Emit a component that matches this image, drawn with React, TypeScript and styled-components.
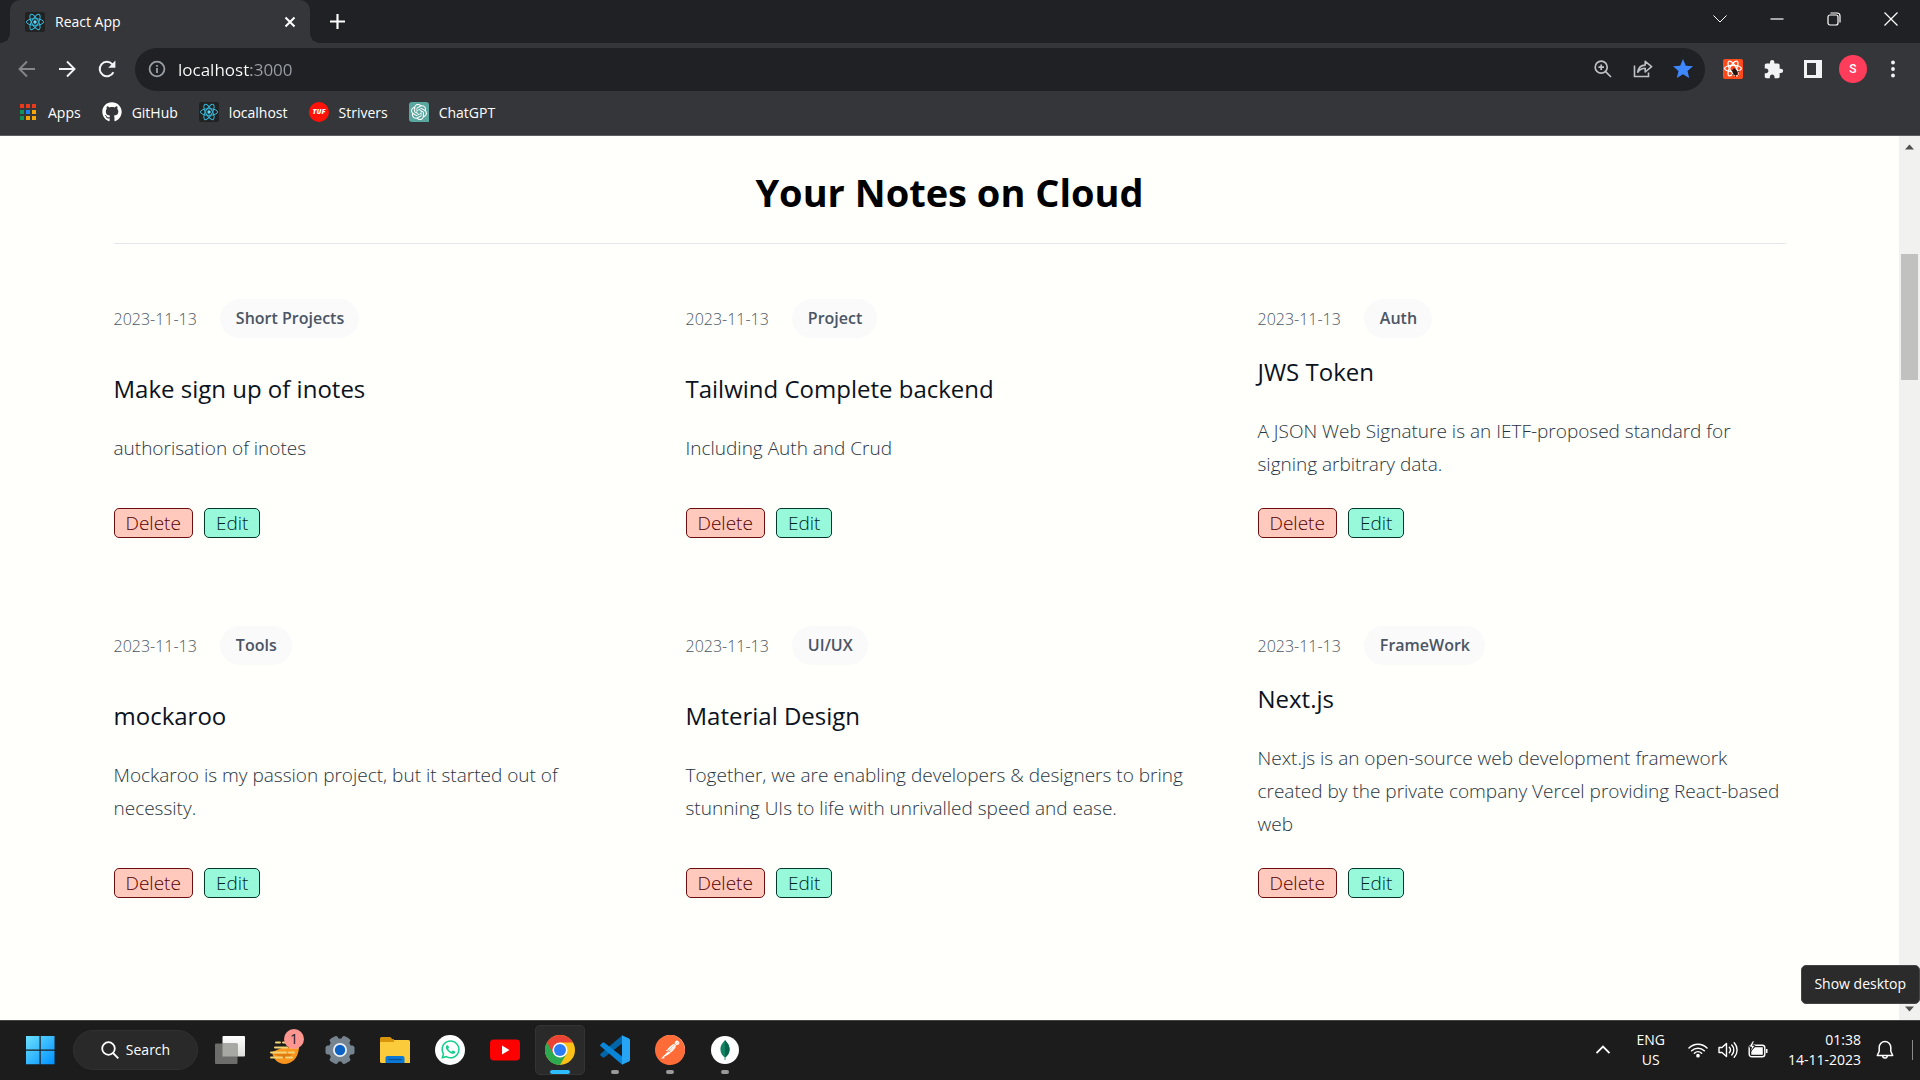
import React from "react";
import styled, { createGlobalStyle } from "styled-components";
import { FaGithub, FaWhatsapp } from "react-icons/fa";
import { SiOpenai, SiPostman } from "react-icons/si";
import { MdExtension, MdStar } from "react-icons/md";

const GlobalStyle = createGlobalStyle`
  *, *::before, *::after { box-sizing: border-box; }
  body {
    margin: 0;
    background: #fffffb;
    font-family: "Open Sans", "Noto Sans", sans-serif;
  }
  button, input { font: inherit; color: inherit; }
  button { padding: 0; border: 0; background: none; cursor: pointer; }
  h1, h2, p, ul { margin: 0; padding: 0; }
  a { color: inherit; text-decoration: none; }
  svg { display: block; flex-shrink: 0; }
`;

const Shell = styled.div`
  display: flex;
  flex-direction: column;
  height: 100vh;
  overflow: hidden;
`;

/* ---------- browser chrome ---------- */

const TabStrip = styled.div`
  display: flex;
  align-items: center;
  height: 43px;
  padding: 0 1px 0 10px;
  background: #202124;
  color: #fff;
`;

const Tab = styled.div`
  position: relative;
  display: flex;
  align-items: center;
  gap: 10px;
  width: 300px;
  height: 43px;
  padding: 0 8px 0 15px;
  border-radius: 10px 10px 0 0;
  background: #35363a;
  font-size: 14px;

  &::before,
  &::after {
    content: "";
    position: absolute;
    bottom: 0;
    width: 10px;
    height: 10px;
  }
  &::before {
    right: 100%;
    background: radial-gradient(circle at 0 0, #202124 10px, #35363a 10px);
  }
  &::after {
    left: 100%;
    background: radial-gradient(circle at 100% 0, #202124 10px, #35363a 10px);
  }
`;

const TabTitle = styled.span`
  flex: 1;
`;

const IconButton = styled.button`
  display: flex;
  align-items: center;
  justify-content: center;
  flex-shrink: 0;
  width: 24px;
  height: 24px;
`;

const NewTabButton = styled(IconButton)`
  margin-left: 15px;
`;

const WindowButtons = styled.div`
  display: flex;
  margin-left: auto;
  height: 37px;
  align-self: flex-start;
`;

const WindowButton = styled.button`
  display: flex;
  align-items: center;
  justify-content: center;
  width: 57px;
`;

const Toolbar = styled.div`
  display: flex;
  align-items: center;
  gap: 16px;
  height: 52px;
  padding: 0 15px;
  background: #35363a;
  color: #f1f3f4;
`;

const Omnibox = styled.label`
  display: flex;
  align-items: center;
  gap: 16px;
  flex: 1;
  height: 43px;
  padding: 0 10px;
  border-radius: 22px;
  background: #202124;
  color: #9aa0a6;
`;

const AddressInput = styled.input`
  flex: 1;
  min-width: 0;
  margin-left: -7px;
  padding: 0;
  border: 0;
  outline: 0;
  font-size: 17px;
  color: #9aa0a6;
  background: linear-gradient(90deg, #ffffff 73px, #9aa0a6 73px);
  background-clip: text;
  -webkit-text-fill-color: transparent;
`;

const Avatar = styled.span`
  flex-shrink: 0;
  width: 28px;
  height: 28px;
  border-radius: 50%;
  background: #ff3d5a;
  color: #fff;
  font-family: Roboto, sans-serif;
  font-size: 12px;
  font-weight: 500;
  line-height: 28px;
  text-align: center;
`;

const BookmarkBar = styled.nav`
  display: flex;
  align-items: center;
  gap: 21px;
  height: 41px;
  padding: 0 18px 6px;
  border-bottom: 1px solid #5c5d60;
  background: #35363a;
  color: #fff;
  font-size: 14px;
`;

const Bookmark = styled.a`
  display: flex;
  align-items: center;
  gap: 10px;
  height: 32px;
`;

const GptTile = styled.span`
  display: flex;
  align-items: center;
  justify-content: center;
  width: 20px;
  height: 20px;
  border-radius: 3px 3px 0 3px;
  background: #5aa79f;
  color: #fff;
`;

/* ---------- notes page ---------- */

const Viewport = styled.div`
  display: flex;
  flex: 1;
  min-height: 0;
  overflow: hidden;
`;

const Page = styled.main`
  flex: 1;
  min-width: 0;
  padding: 0 32px;
  background: #fffffb;
`;

const Content = styled.div`
  max-width: 1672px;
  margin: 0 auto;
`;

const Heading = styled.h1`
  padding: 29px 0 23px;
  border-bottom: 1px solid #e5e7eb;
  color: #000;
  font-size: 38px;
  font-weight: 700;
  line-height: 55px;
  text-align: center;
`;

const NoteGrid = styled.div`
  display: grid;
  grid-template-columns: repeat(3, minmax(0, 1fr));
  gap: 88px 44px;
  padding-top: 55px;
`;

const Note = styled.article`
  display: flex;
  flex-direction: column;
  align-items: flex-start;
  justify-content: space-between;
`;

const NoteMeta = styled.div`
  display: flex;
  align-items: center;
  gap: 23px;
  font-size: 16px;
  line-height: 22px;
`;

const NoteDate = styled.time`
  color: #4b5563;
  font-weight: 300;
`;

const Tag = styled.a`
  padding: 8px 15px 9px 16px;
  border-radius: 20px;
  background: #fafafb;
  color: #4b5563;
  font-weight: 600;
`;

const NoteTitle = styled.h2`
  margin-top: 17px;
  color: #0b1220;
  font-size: 24px;
  font-weight: 500;
  line-height: 33px;
`;

const NoteText = styled.p`
  margin-top: 27px;
  padding-right: 4px;
  color: #293442;
  font-size: 19px;
  font-weight: 300;
  line-height: 33px;
`;

const NoteActions = styled.div`
  display: flex;
  gap: 11px;
  margin-top: 27px;
`;

const ActionButton = styled.button<{ $tone: "danger" | "success" }>`
  height: 30px;
  padding: 0 11px;
  border: 1px solid ${(p) => (p.$tone === "danger" ? "#6b0f0f" : "#04382b")};
  border-radius: 5px;
  background: ${(p) => (p.$tone === "danger" ? "#ffc9be" : "#98f8da")};
  color: ${(p) => (p.$tone === "danger" ? "#520000" : "#00281d")};
  font-size: 19px;
  font-weight: 300;
  line-height: 28px;
`;

const ScrollTrack = styled.div`
  display: flex;
  flex-direction: column;
  align-items: center;
  width: 21px;
  padding: 8px 0;
  background: #f1f1f0;
`;

const ScrollThumb = styled.div`
  width: 17px;
  height: 126px;
  margin: 104px 0 auto;
  background: #c1c1bf;
`;

/* ---------- taskbar ---------- */

const Taskbar = styled.footer`
  display: flex;
  align-items: center;
  justify-content: space-between;
  height: 60px;
  padding: 0 7px 2px 15px;
  border-top: 1px solid #434343;
  background: #1c1c1c;
  color: #fff;
  font-size: 14px;
`;

const AppList = styled.div`
  display: flex;
  align-items: center;
  gap: 5px;
`;

const SearchButton = styled.button`
  display: flex;
  align-items: center;
  justify-content: center;
  gap: 7px;
  width: 125px;
  height: 40px;
  margin: 0 2px 0 3px;
  border: 1px solid #303030;
  border-radius: 20px;
  background: #292929;
`;

const AppButton = styled.button<{ $active?: boolean }>`
  position: relative;
  display: flex;
  align-items: center;
  justify-content: center;
  width: 50px;
  height: 50px;
  border: 1px solid ${(p) => (p.$active ? "#343434" : "transparent")};
  border-radius: 5px;
  background: ${(p) => (p.$active ? "#2a2a2a" : "transparent")};
`;

const RunMark = styled.span<{ $active?: boolean }>`
  position: absolute;
  bottom: 0;
  left: 50%;
  width: ${(p) => (p.$active ? 20 : 8)}px;
  height: 4px;
  transform: translateX(-50%);
  border-radius: 2px;
  background: ${(p) => (p.$active ? "#2cbcff" : "#999")};
`;

const CountBadge = styled.span`
  position: absolute;
  top: 3px;
  right: 5px;
  width: 20px;
  height: 20px;
  border-radius: 50%;
  background: #ff968f;
  color: #1c1c1c;
  font-size: 14px;
  line-height: 20px;
  text-align: center;
`;

const WhiteDisc = styled.span<{ $size: number }>`
  display: flex;
  align-items: center;
  justify-content: center;
  width: ${(p) => p.$size}px;
  height: ${(p) => p.$size}px;
  border-radius: 50%;
  background: #fff;
`;

const Tray = styled.div`
  display: flex;
  align-items: center;
`;

const Language = styled.button`
  margin-left: 21px;
  line-height: 20px;
  text-align: center;
`;

const StatusButton = styled.button`
  display: flex;
  align-items: center;
  gap: 10px;
  margin-left: 23px;
`;

const Clock = styled.button`
  margin: 0 12px 0 20px;
  line-height: 20px;
  text-align: right;
`;

const Line = styled.span`
  display: block;
`;

const DesktopEdge = styled.button`
  width: 1px;
  height: 20px;
  margin-left: 15px;
  background: #8a8a8a;
`;

const Tooltip = styled.div`
  position: fixed;
  right: 0;
  bottom: 76px;
  padding: 8px 13px 9px 12px;
  border: 1px solid #454545;
  border-radius: 5px;
  background: #2b2b2b;
  color: #fff;
  font-size: 14px;
  line-height: 20px;
`;

/* ---------- drawings ---------- */

const ReactTile = () => (
  <svg width="20" height="20" viewBox="0 0 20 20">
    <rect width="20" height="20" rx="2" fill="#222" />
    <g fill="none" stroke="#35b9dc" strokeWidth="1">
      <ellipse cx="10" cy="10" rx="8.6" ry="3.3" />
      <ellipse cx="10" cy="10" rx="8.6" ry="3.3" transform="rotate(60 10 10)" />
      <ellipse cx="10" cy="10" rx="8.6" ry="3.3" transform="rotate(120 10 10)" />
    </g>
    <circle cx="10" cy="10" r="1.7" fill="#5fdcff" />
  </svg>
);

const AppsGrid = () => {
  const colors = ["#ea3a1b", "#ea3a1b", "#ea3a1b", "#12915a", "#1a82f0", "#f6a60a", "#12915a", "#f6a60a", "#f6a60a"];
  return (
    <svg width="20" height="20" viewBox="0 0 20 20">
      {colors.map((c, i) => (
        <rect key={i} x={2 + (i % 3) * 6} y={2 + Math.floor(i / 3) * 6} width="4" height="4" fill={c} />
      ))}
    </svg>
  );
};

const StriverLogo = () => (
  <svg width="20" height="20" viewBox="0 0 20 20">
    <circle cx="10" cy="10" r="10" fill="#ff1308" />
    <text x="10" y="12.4" fill="#fff" fontFamily="Open Sans, sans-serif" fontSize="7" fontWeight="800" fontStyle="italic" textAnchor="middle">TUF</text>
  </svg>
);

const Arrow = ({ flip, color }: { flip?: boolean; color: string }) => (
  <svg width="20" height="20" viewBox="0 0 20 20" fill="none" stroke={color} strokeWidth="1.9">
    <path d={flip ? "M2 10h15M10 2.5l7.5 7.5-7.5 7.5" : "M18 10H3M10 2.5L2.5 10l7.5 7.5"} />
  </svg>
);

const Reload = () => (
  <svg width="20" height="20" viewBox="0 0 20 20">
    <path d="M16.4 13.2a7.2 7.2 0 1 1-1.2-8.1l1.3 1.4" fill="none" stroke="#f1f3f4" strokeWidth="2" />
    <path d="M18.4 1.6v7.2h-7.2z" fill="#f1f3f4" />
  </svg>
);

const Info = () => (
  <svg width="18" height="18" viewBox="0 0 18 18" fill="none" stroke="#9aa0a6" strokeWidth="1.8">
    <circle cx="9" cy="9" r="7.4" />
    <path d="M9 8v5M9 4.9v1.9" />
  </svg>
);

const ZoomIn = () => (
  <svg width="20" height="20" viewBox="0 0 20 20" fill="none" stroke="#bdc1c6" strokeWidth="1.7">
    <circle cx="8.2" cy="8.2" r="6" />
    <path d="M12.6 12.6l5.4 5.4M8.2 5.4V11M5.4 8.2H11" />
  </svg>
);

const Share = () => (
  <svg width="20" height="20" viewBox="0 0 20 20" fill="none" stroke="#bdc1c6" strokeWidth="1.6">
    <path d="M1.5 6.5v11h14v-4" />
    <path d="M4.8 13.2c.5-4.3 3-6.9 7.400-7.100V2.400L18.600 7.700l-6.400 5.300V9.300c-3.400 0-5.600 1.300-7.400 3.900z" strokeLinejoin="round" />
  </svg>
);

const RedReact = () => (
  <svg width="22" height="22" viewBox="0 0 22 22">
    <rect x="1" y="1" width="20" height="20" rx="2" fill="#ff4a1c" />
    <g fill="none" stroke="#fff" strokeWidth="1.3">
      <ellipse cx="11" cy="10.500" rx="8.400" ry="3.200" />
      <ellipse cx="11" cy="10.500" rx="8.400" ry="3.200" transform="rotate(60 11 10.500)" />
      <ellipse cx="11" cy="10.500" rx="8.400" ry="3.200" transform="rotate(120 11 10.500)" />
    </g>
    <ellipse cx="13" cy="14" rx="2.300" ry="3.600" transform="rotate(-30 13 14)" fill="#26140f" />
    <path d="M9.500 12l7 5.500M10 17l7.500-4M12 10l1.500 9" stroke="#26140f" strokeWidth=".8" />
  </svg>
);

const SidePanel = () => (
  <svg width="18" height="18" viewBox="0 0 18 18">
    <path fillRule="evenodd" d="M0 0h18v18H0zM3 3h9v12H3z" fill="#f1f3f4" />
  </svg>
);

const Dots = () => (
  <svg width="6" height="18" viewBox="0 0 6 18" fill="#f1f3f4">
    <circle cx="3" cy="2.500" r="1.900" />
    <circle cx="3" cy="9" r="1.900" />
    <circle cx="3" cy="15.500" r="1.900" />
  </svg>
);

const Stroke = ({ d, size = 14, width = 1.2 }: { d: string; size?: number; width?: number }) => (
  <svg width={size} height={size} viewBox="0 0 14 14" fill="none" stroke="#fff" strokeWidth={width}>
    <path d={d} />
  </svg>
);

const Triangle = ({ down }: { down?: boolean }) => (
  <svg width="9" height="6" viewBox="0 0 9 6">
    <path d={down ? "M0 .5h9L4.500 5.500z" : "M0 5.500h9L4.500.5z"} fill="#505050" />
  </svg>
);

const WindowsLogo = () => (
  <svg width="30" height="30" viewBox="0 0 30 30">
    <defs>
      <linearGradient id="win" x1="0" y1="0" x2="1" y2="1">
        <stop offset="0" stopColor="#6be0ff" />
        <stop offset="1" stopColor="#0091ff" />
      </linearGradient>
    </defs>
    <path d="M1 1h13.500v13.500H1zM15.700 1H29.500v13.500H15.700zM1 15.700h13.500v13.500H1zM15.700 15.700h13.800v13.500H15.700z" fill="url(#win)" />
  </svg>
);

const TaskView = () => (
  <svg width="30" height="30" viewBox="0 0 30 30">
    <defs>
      <linearGradient id="tv" x1="0" y1="0" x2="0" y2="1">
        <stop offset="0" stopColor="#fff" />
        <stop offset="1" stopColor="#dcdcda" />
      </linearGradient>
    </defs>
    <rect x="7.500" y="1" width="22.500" height="20.500" rx="1" fill="url(#tv)" />
    <rect x="0" y="8.500" width="22.500" height="20.500" rx="1" fill="#6d6d6b" />
    <rect x="7.500" y="8.500" width="15" height="13" fill="#a7a7a4" />
  </svg>
);

const HeadlineIcon = () => (
  <svg width="30" height="30" viewBox="0 0 30 30">
    <path d="M2 17C3 24 8 29 14.500 29S28 24 29 13L14 12z" fill="#f9941e" />
    <path d="M4 19h18a9 9 0 0 1-9 4z" fill="#e07b10" />
    <path d="M6 7.500h4M13 7.500h4M5 12.500h12M20 12.500h8M1 17.500h15M19 17.500h5M1 22.500h11M16 22.500h6" stroke="#f1d377" strokeWidth="2" strokeLinecap="round" />
  </svg>
);

const Gear = () => (
  <svg width="30" height="30" viewBox="0 0 30 30">
    <g fill="#76848f">
      {[0, 60, 120].map((a) => (
        <rect key={a} x="10.500" y="0.500" width="9" height="29" rx="2.500" transform={`rotate(${a + 30} 15 15)`} />
      ))}
      <circle cx="15" cy="15" r="11.500" />
    </g>
    <circle cx="15" cy="15" r="7" fill="#e9eef2" />
    <circle cx="15" cy="15" r="5.200" fill="#0b62c4" />
  </svg>
);

const Folder = () => (
  <svg width="30" height="30" viewBox="0 0 30 30">
    <path d="M0 3.500A1.500 1.500 0 0 1 1.500 2h8.700l3 3H0z" fill="#d9940d" />
    <path d="M0 5h28.500A1.500 1.500 0 0 1 30 6.500V28H1.500A1.500 1.500 0 0 1 0 26.500z" fill="#fbcb3c" />
    <path d="M0 4.500h12l2-.5v3H0z" fill="#d9940d" />
    <path d="M5.500 28v-5a2 2 0 0 1 2-2h15a2 2 0 0 1 2 2v5z" fill="#0a78d4" />
    <path d="M8.500 24.500h13" stroke="#0a4f94" strokeWidth="1.200" />
  </svg>
);

const YouTube = () => (
  <svg width="30" height="22" viewBox="0 0 30 22">
    <rect y=".5" width="30" height="21" rx="4" fill="#fe0000" />
    <path d="M12 6.500l7.500 4.500-7.500 4.500z" fill="#fff" />
  </svg>
);

const Chrome = () => (
  <svg width="30" height="30" viewBox="0 0 48 48">
    <circle cx="24" cy="24" r="24" fill="#fbc116" />
    <path d="M3.215 12A24 24 0 0 0 24 48L34.400 30 24 24z" fill="#2da94f" />
    <path d="M3.215 12a24 24 0 0 1 41.570 0H24L13.600 30z" fill="#ea4335" />
    <circle cx="24" cy="24" r="12" fill="#fff" />
    <circle cx="24" cy="24" r="9.600" fill="#2b7cf5" />
  </svg>
);

const VsCode = () => (
  <svg width="30" height="30" viewBox="0 0 30 30">
    <path d="M22 0.500v8L4.500 22.300a1.500 1.500 0 0 1-2 0L.6 20.600a1.300 1.300 0 0 1 0-1.900z" fill="#0065a9" />
    <path d="M22 29.500v-8L4.500 7.700a1.500 1.500 0 0 0-2 0L.6 9.400a1.300 1.300 0 0 0 0 1.900z" fill="#0a86d8" />
    <path d="M22 .3l7 3.200a1.500 1.500 0 0 1 1 1.500v20a1.500 1.500 0 0 1-1 1.500l-7 3.200z" fill="#27a5f5" />
  </svg>
);

const MongoLeaf = () => (
  <svg width="10" height="20" viewBox="0 0 10 20">
    <path d="M5 0c1 2 4.600 4 4.600 9.300 0 4-2.300 6.400-4.200 8V20h-.8v-2.700C2.700 15.700.4 13.300.4 9.300.4 4 4 2 5 0z" fill="#0f8363" />
    <path d="M5 0c1 2 4.600 4 4.600 9.300 0 4-2.300 6.400-4.200 8H5z" fill="#04644c" />
  </svg>
);

const SearchGlass = () => (
  <svg width="18" height="18" viewBox="0 0 18 18" fill="none" stroke="#fff" strokeWidth="1.800">
    <circle cx="7.500" cy="7.500" r="6.300" />
    <path d="M12 12l5.300 5.300" />
  </svg>
);

const Wifi = () => (
  <svg width="20" height="16" viewBox="0 0 20 16" fill="none" stroke="#fff" strokeWidth="1.500" strokeLinecap="round">
    <path d="M1 6a12.500 12.500 0 0 1 18 0M3.700 8.700a9 9 0 0 1 12.600 0M6.400 11.300a5.200 5.200 0 0 1 7.200 0" />
    <circle cx="10" cy="13.700" r="1.100" fill="#fff" />
  </svg>
);

const Volume = () => (
  <svg width="20" height="18" viewBox="0 0 20 18" fill="none" stroke="#fff" strokeWidth="1.400" strokeLinecap="round" strokeLinejoin="round">
    <path d="M1 6.500h3L8.500 2.500v13L4 11.500H1zM11.300 6.300a4 4 0 0 1 0 5.400M13.800 4a7.200 7.200 0 0 1 0 10M16.200 1.800a10.400 10.400 0 0 1 0 14.400" />
  </svg>
);

const Battery = () => (
  <svg width="20" height="18" viewBox="0 0 20 18">
    <rect x="1.200" y="4.200" width="15.600" height="11.600" rx="2.500" fill="none" stroke="#fff" strokeWidth="1.400" />
    <path d="M3.300 13.800V10l3.500-3.800h8v7.600zM18 8h1.500v4H18z" fill="#fff" />
    <path d="M4.500 0L1 6h2.500L2.500 11 7 4.500H4.500L6.500 0z" fill="#fff" stroke="#1c1c1c" strokeWidth=".8" />
  </svg>
);

const Bell = () => (
  <svg width="18" height="20" viewBox="0 0 18 20" fill="none" stroke="#fff" strokeWidth="1.500" strokeLinejoin="round">
    <path d="M9 1.500a5.800 5.800 0 0 0-5.800 5.800v4L1.300 15.500h15.400l-1.900-4.200v-4A5.800 5.800 0 0 0 9 1.500zM6.700 15.800a2.300 2.300 0 0 0 4.600 0" />
  </svg>
);

/* ---------- data ---------- */

const notes = [
  { tag: "Short Projects", title: "Make sign up of inotes", text: "authorisation of inotes" },
  { tag: "Project", title: "Tailwind Complete backend", text: "Including Auth and Crud" },
  { tag: "Auth", title: "JWS Token", text: "A JSON Web Signature is an IETF-proposed standard for signing arbitrary data." },
  { tag: "Tools", title: "mockaroo", text: "Mockaroo is my passion project, but it started out of necessity." },
  { tag: "UI/UX", title: "Material Design", text: "Together, we are enabling developers & designers to bring stunning UIs to life with unrivalled speed and ease." },
  { tag: "FrameWork", title: "Next.js", text: "Next.js is an open-source web development framework created by the private company Vercel providing React-based web" },
];

const bookmarks = [
  { name: "Apps", icon: <AppsGrid /> },
  { name: "GitHub", icon: <FaGithub size={20} /> },
  { name: "localhost", icon: <ReactTile /> },
  { name: "Strivers", icon: <StriverLogo /> },
  { name: "ChatGPT", icon: <GptTile><SiOpenai size={16} /></GptTile> },
];

const apps = [
  { name: "Task view", icon: <TaskView /> },
  { name: "Headlines", icon: <HeadlineIcon />, count: 1 },
  { name: "Settings", icon: <Gear /> },
  { name: "File Explorer", icon: <Folder /> },
  { name: "WhatsApp", icon: <WhiteDisc $size={30}><FaWhatsapp size={21} color="#14d08c" /></WhiteDisc> },
  { name: "YouTube", icon: <YouTube /> },
  { name: "Chrome", icon: <Chrome />, running: true, active: true },
  { name: "Visual Studio Code", icon: <VsCode />, running: true },
  { name: "Postman", icon: <WhiteDisc $size={29}><SiPostman size={30} color="#ff6c37" /></WhiteDisc>, running: true },
  { name: "MongoDB Compass", icon: <WhiteDisc $size={28}><MongoLeaf /></WhiteDisc>, running: true },
];

export default function App() {
  return (
    <Shell>
      <GlobalStyle />
      <header>
        <TabStrip>
          <Tab>
            <ReactTile />
            <TabTitle>React App</TabTitle>
            <IconButton aria-label="Close tab"><Stroke size={14} width={2} d="M2.500 2.500l9 9M11.500 2.500l-9 9" /></IconButton>
          </Tab>
          <NewTabButton aria-label="New tab"><Stroke size={15} width={2} d="M7 0v14M0 7h14" /></NewTabButton>
          <WindowButtons>
            <WindowButton aria-label="Search tabs"><Stroke width={1} d="M.5 3.500L7 10l6.500-6.500" /></WindowButton>
            <WindowButton aria-label="Minimize"><Stroke d="M.5 7h13" /></WindowButton>
            <WindowButton aria-label="Restore"><Stroke d="M3 3h6a2 2 0 0 1 2 2v6a2 2 0 0 1-2 2H3a2 2 0 0 1-2-2V5a2 2 0 0 1 2-2zM3.500 1h6.500a3 3 0 0 1 3 3v6.500" /></WindowButton>
            <WindowButton aria-label="Close"><Stroke d="M.5.5l13 13M13.500.5l-13 13" /></WindowButton>
          </WindowButtons>
        </TabStrip>
        <Toolbar>
          <IconButton aria-label="Back"><Arrow color="#85868a" /></IconButton>
          <IconButton aria-label="Forward"><Arrow flip color="#f1f3f4" /></IconButton>
          <IconButton aria-label="Reload"><Reload /></IconButton>
          <Omnibox>
            <IconButton aria-label="Site information"><Info /></IconButton>
            <AddressInput aria-label="Address" defaultValue="localhost:3000" />
            <IconButton aria-label="Zoom"><ZoomIn /></IconButton>
            <IconButton aria-label="Share"><Share /></IconButton>
            <IconButton aria-label="Bookmarked"><MdStar size={24} color="#3f87ff" /></IconButton>
          </Omnibox>
          <IconButton aria-label="React extension"><RedReact /></IconButton>
          <IconButton aria-label="Extensions"><MdExtension size={21} /></IconButton>
          <IconButton aria-label="Side panel"><SidePanel /></IconButton>
          <IconButton aria-label="Profile"><Avatar>S</Avatar></IconButton>
          <IconButton aria-label="Menu"><Dots /></IconButton>
        </Toolbar>
        <BookmarkBar>
          {bookmarks.map((b) => (
            <Bookmark key={b.name} href="#">{b.icon}{b.name}</Bookmark>
          ))}
        </BookmarkBar>
      </header>

      <Viewport>
        <Page>
          <Content>
            <Heading>Your Notes on Cloud</Heading>
            <NoteGrid>
              {notes.map((n) => (
                <Note key={n.title}>
                  <NoteMeta>
                    <NoteDate dateTime="2023-11-13">2023-11-13</NoteDate>
                    <Tag href="#">{n.tag}</Tag>
                  </NoteMeta>
                  <div>
                    <NoteTitle>{n.title}</NoteTitle>
                    <NoteText>{n.text}</NoteText>
                  </div>
                  <NoteActions>
                    <ActionButton $tone="danger">Delete</ActionButton>
                    <ActionButton $tone="success">Edit</ActionButton>
                  </NoteActions>
                </Note>
              ))}
            </NoteGrid>
          </Content>
        </Page>
        <ScrollTrack>
          <Triangle />
          <ScrollThumb />
          <Triangle down />
        </ScrollTrack>
      </Viewport>

      <Taskbar>
        <AppList>
          <AppButton aria-label="Start"><WindowsLogo /></AppButton>
          <SearchButton><SearchGlass />Search</SearchButton>
          {apps.map((a) => (
            <AppButton key={a.name} aria-label={a.name} $active={a.active}>
              {a.icon}
              {a.count && <CountBadge>{a.count}</CountBadge>}
              {a.running && <RunMark $active={a.active} />}
            </AppButton>
          ))}
        </AppList>
        <Tray>
          <IconButton aria-label="Hidden icons"><Stroke width={1.8} d="M.5 10L7 3.500l6.500 6.500" /></IconButton>
          <Language><Line>ENG</Line><Line>US</Line></Language>
          <StatusButton aria-label="Network, volume and battery"><Wifi /><Volume /><Battery /></StatusButton>
          <Clock><Line>01:38</Line><Line>14-11-2023</Line></Clock>
          <IconButton aria-label="Notifications"><Bell /></IconButton>
          <DesktopEdge aria-label="Show desktop" />
        </Tray>
      </Taskbar>
      <Tooltip role="tooltip">Show desktop</Tooltip>
    </Shell>
  );
}
